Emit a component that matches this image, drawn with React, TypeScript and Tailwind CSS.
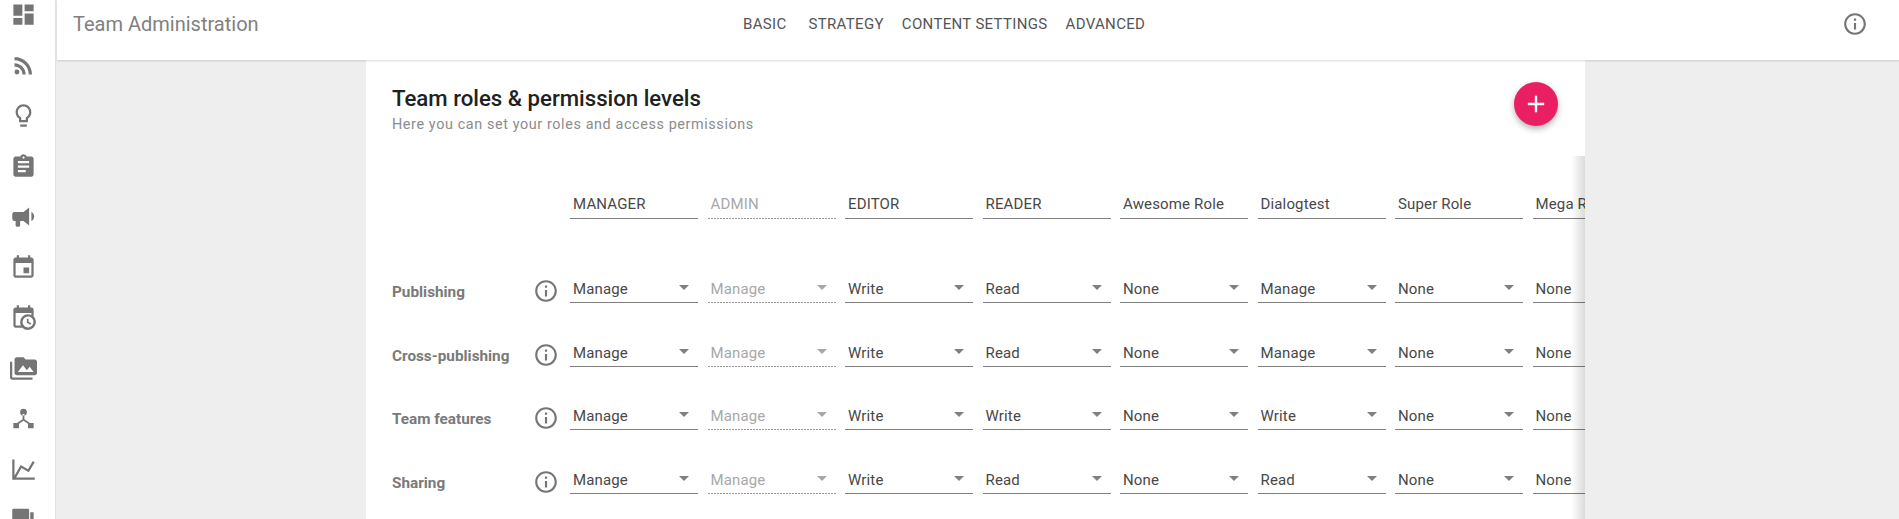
import React from 'react';

const paths = {
  dashboard: 'M3 13h8V3H3v10zm0 8h8v-6H3v6zm10 0h8V11h-8v10zm0-18v6h8V3h-8z',
  rss: 'M4 4.44v2.83c7.03 0 12.73 5.7 12.73 12.73h2.83c0-8.59-6.97-15.56-15.56-15.56zm0 5.66v2.83c3.9 0 7.07 3.17 7.07 7.07h2.83c0-5.47-4.43-9.9-9.9-9.9zM6.18 15.64a2.18 2.18 0 1 0 0 4.36 2.18 2.18 0 0 0 0-4.36z',
  bulb: 'M9 21c0 .55.45 1 1 1h4c.55 0 1-.45 1-1v-1H9v1zm3-19C8.14 2 5 5.14 5 9c0 2.38 1.19 4.47 3 5.74V17c0 .55.45 1 1 1h6c.55 0 1-.45 1-1v-2.26c1.81-1.27 3-3.36 3-5.74 0-3.86-3.14-7-7-7zm2.85 11.1l-.85.6V16h-4v-2.3l-.85-.6C7.8 12.16 7 10.63 7 9c0-2.76 2.24-5 5-5s5 2.24 5 5c0 1.63-.8 3.16-2.15 4.1z',
  assignment: 'M19 3h-4.18C14.4 1.84 13.3 1 12 1c-1.3 0-2.4.84-2.82 2H5c-1.1 0-2 .9-2 2v14c0 1.1.9 2 2 2h14c1.1 0 2-.9 2-2V5c0-1.1-.9-2-2-2zm-7 0c.55 0 1 .45 1 1s-.45 1-1 1-1-.45-1-1 .45-1 1-1zm2 14H7v-2h7v2zm3-4H7v-2h10v2zm0-4H7V7h10v2z',
  bullhorn: 'M12 8H4a2 2 0 0 0-2 2v4a2 2 0 0 0 2 2h1v4a1 1 0 0 0 1 1h2a1 1 0 0 0 1-1v-4h3l5 4V4l-5 4zm9.5 4c0 1.71-.96 3.26-2.5 4V8c1.53.75 2.5 2.3 2.5 4z',
  event: 'M17 12h-5v5h5v-5zM16 1v2H8V1H6v2H5c-1.11 0-1.99.9-1.99 2L3 19c0 1.1.89 2 2 2h14c1.1 0 2-.9 2-2V5c0-1.1-.9-2-2-2h-1V1h-2zm3 18H5V8h14v11z',
  calendarClock: 'M15 13h1.5v2.82l2.44 1.41-.75 1.3L15 16.69V13zm4-5H5v11h4.67A7 7 0 0 1 9 16a7 7 0 0 1 7-7c1.07 0 2.09.24 3 .67V8zM5 21c-1.11 0-2-.9-2-2V5c0-1.11.89-2 2-2h1V1h2v2h8V1h2v2h1a2 2 0 0 1 2 2v6.1c1.24 1.26 2 2.99 2 4.9a7 7 0 0 1-7 7c-1.91 0-3.64-.76-4.9-2H5zm11-9.85A4.85 4.85 0 0 0 11.15 16c0 2.68 2.17 4.85 4.85 4.85A4.85 4.85 0 0 0 20.85 16c0-2.68-2.17-4.85-4.85-4.85z',
  media: 'M2 6H0v5h.01L0 20c0 1.1.9 2 2 2h18v-2H2V6zm20-2h-8l-2-2H6c-1.1 0-1.99.9-1.99 2L4 16c0 1.1.9 2 2 2h16c1.1 0 2-.9 2-2V6c0-1.1-.9-2-2-2zM7 15l4.5-6 3.5 4.51 2.5-3.01L21 15H7z',
  tree: 'M9 6.4a3 3 0 1 0 6 0 3 3 0 0 0-6 0zM3 16h5v4.6H3zM16 16h5v4.6h-5zM11.2 8h1.6v4.6l5 3.4-.9 1.3-4.9-3.3-4.9 3.3-.9-1.3 5-3.4z',
  chart: 'M16 11.78l4.24-7.33 1.73 1-5.23 9.05-6.51-3.75L5.46 19H22v2H2V3h2v14.54L9.5 8l6.5 3.78z',
  video: 'M2 3.5a1 1 0 0 1 1-1h13a1 1 0 0 1 1 1V20a1 1 0 0 1-1 1H3a1 1 0 0 1-1-1V3.5zm16 2h3V20h-3V5.5z',
  info: 'M11 7h2v2h-2zm0 4h2v6h-2zm1-9C6.48 2 2 6.48 2 12s4.48 10 10 10 10-4.48 10-10S17.52 2 12 2zm0 18c-4.41 0-8-3.59-8-8s3.59-8 8-8 8 3.59 8 8-3.59 8-8 8z',
};

const Icon = ({ d, className }: { d: string; className: string }) => (
  <svg viewBox="0 0 24 24" className={className} fill="currentColor">
    <path d={d} />
  </svg>
);

const sideIcons = [
  paths.dashboard,
  paths.rss,
  paths.bulb,
  paths.assignment,
  paths.bullhorn,
  paths.event,
  paths.calendarClock,
  paths.media,
  paths.tree,
  paths.chart,
  paths.video,
];

const roles = ['MANAGER', 'ADMIN', 'EDITOR', 'READER', 'Awesome Role', 'Dialogtest', 'Super Role', 'Mega Role'];

const rows = [
  { label: 'Publishing', values: ['Manage', 'Manage', 'Write', 'Read', 'None', 'Manage', 'None', 'None'] },
  { label: 'Cross-publishing', values: ['Manage', 'Manage', 'Write', 'Read', 'None', 'Manage', 'None', 'None'] },
  { label: 'Team features', values: ['Manage', 'Manage', 'Write', 'Write', 'None', 'Write', 'None', 'None'] },
  { label: 'Sharing', values: ['Manage', 'Manage', 'Write', 'Read', 'None', 'Read', 'None', 'None'] },
];

// disabled cells have a 2-on 1-off line, border-dotted comes out too fine
const lineOn = 'text-[#484848] border-b border-[#808080]';
const lineOff =
  'text-[#a8a8a8] bg-[repeating-linear-gradient(90deg,#9a9a9a_0,#9a9a9a_2px,transparent_2px,transparent_3px)] bg-[length:100%_1px] bg-bottom bg-no-repeat';

const RoleCell = ({ name, disabled }: { name: string; disabled: boolean }) => (
  <div
    className={`w-[128px] h-[32px] shrink-0 pl-[3px] pt-[5px] text-[15px] leading-[24px] tracking-[0.15px] whitespace-nowrap ${
      disabled ? lineOff : lineOn
    }`}
  >
    {name}
  </div>
);

const SelectCell = ({ value, disabled }: { value: string; disabled: boolean }) => (
  <div
    className={`relative w-[128px] h-[32px] shrink-0 pl-[3px] pt-[6px] text-[15px] leading-[24px] tracking-[0.15px] ${
      disabled ? lineOff : lineOn
    }`}
  >
    {value}
    <span
      className={`absolute right-[9px] top-[14px] w-0 h-0 border-x-[5px] border-x-transparent border-t-[5px] ${
        disabled ? 'border-t-[#a8a8a8]' : 'border-t-[#808080]'
      }`}
    />
  </div>
);

export default function App() {
  return (
    <div className="flex w-[1899px] h-[519px] overflow-hidden bg-[#eeeeee] font-['Roboto',sans-serif]">
      <aside className="w-[56px] shrink-0 h-full overflow-hidden bg-white border-r border-[#e2e2e2] text-[#757575]">
        <div className="flex flex-col gap-[23.5px] items-center mt-[1px] pr-[9px]">
          {sideIcons.map((d, i) => (
            <Icon key={i} d={d} className="w-[27px] h-[27px] shrink-0" />
          ))}
        </div>
      </aside>

      <div className="flex-1 min-w-0 flex flex-col">
        <header className="relative z-10 h-[60px] shrink-0 flex items-start bg-white shadow-[0_1px_2px_rgba(0,0,0,0.15)] ml-[1px]">
          <div className="w-[686px] pl-[16px] pt-[10px] text-[20px] leading-[28px] text-[#808080]">
            Team Administration
          </div>
          <nav className="flex gap-[18px] pt-[14px] text-[15px] leading-[20px] tracking-[0.33px] text-[#555555]">
            <span className="mr-[4px]">BASIC</span>
            <span>STRATEGY</span>
            <span>CONTENT SETTINGS</span>
            <span>ADVANCED</span>
          </nav>
          <Icon d={paths.info} className="ml-auto mr-[31px] mt-[11px] w-[26px] h-[26px] text-[#757575]" />
        </header>

        <main className="w-[1219px] ml-[310px] flex-1 bg-white overflow-hidden">
          <div className="h-[96px] flex items-start justify-between pl-[26px] pr-[27px] pt-[23px]">
            <div>
              <h1 className="text-[22.2px] leading-[30px] font-medium text-[#212121]">Team roles &amp; permission levels</h1>
              <p className="mt-[2px] text-[14.4px] leading-[20px] tracking-[0.6px] text-[#8c8c8c]">Here you can set your roles and access permissions</p>
            </div>
            <button className="mt-[-1px] w-[44px] h-[44px] rounded-full bg-[#e91e63] text-white flex items-center justify-center shadow-[0_3px_6px_rgba(0,0,0,0.3)]">
              <svg viewBox="0 0 24 24" className="w-[28px] h-[28px]" fill="currentColor">
                <path d="M19 13h-6v6h-2v-6H5v-2h6V5h2v6h6v2z" />
              </svg>
            </button>
          </div>

          <div className="relative h-[363px] pt-[31px] pl-[26px] overflow-hidden">
            <div className="flex gap-[9.5px] pl-[178px]">
              {roles.map((name, i) => (
                <RoleCell key={name} name={name} disabled={i === 1} />
              ))}
            </div>
            <div className="flex flex-col gap-[31.7px] mt-[52px]">
              {rows.map((row) => (
                <div key={row.label} className="flex items-center h-[32px]">
                  <div className="w-[141px] shrink-0 pt-[10px] text-[15.3px] leading-[20px] font-bold text-[#7a7a7a]">{row.label}</div>
                  <Icon d={paths.info} className="w-[26px] h-[26px] shrink-0 mt-[8px] text-[#757575]" />
                  <div className="flex gap-[9.5px] ml-[11px]">
                    {row.values.map((v, i) => (
                      <SelectCell key={i} value={v} disabled={i === 1} />
                    ))}
                  </div>
                </div>
              ))}
            </div>
            <div className="absolute top-0 bottom-0 right-0 w-[14px] bg-gradient-to-r from-transparent to-[#00000024]" />
          </div>
        </main>
      </div>
    </div>
  );
}
